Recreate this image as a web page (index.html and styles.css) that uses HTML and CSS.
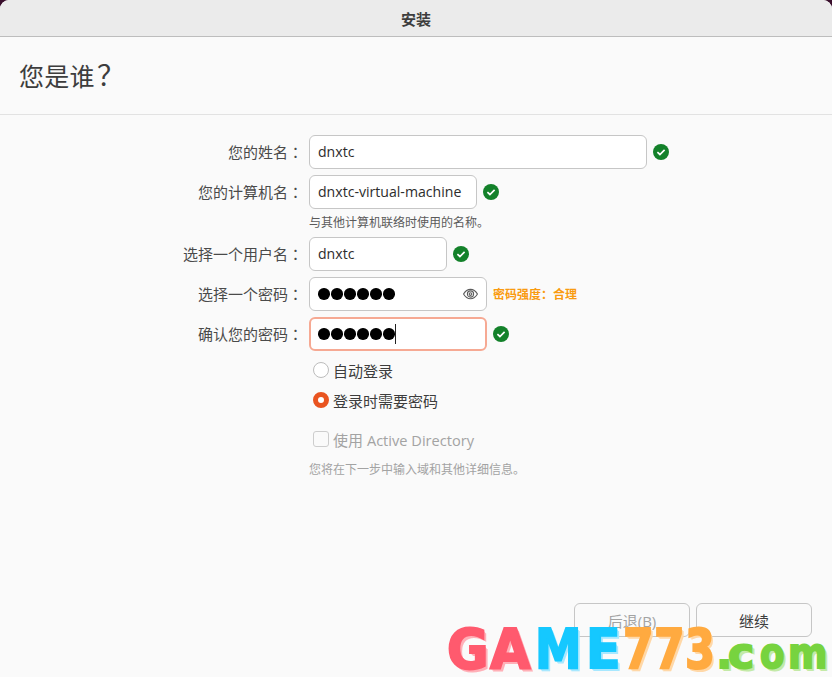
FILE: index.html
```html
<!DOCTYPE html>
<html lang="zh-CN">
<head>
<meta charset="UTF-8" />
<title>安装</title>
<link rel="stylesheet" href="styles.css">
</head>
<body>
<div class="window">
<header class="titlebar">安装</header>
<h1 class="heading">您是谁<span class="punct">？</span></h1>

<form class="form">
<label class="label">您的姓名<span class="punct">：</span></label>
<div class="line">
<div class="field field-name">dnxtc</div>
<svg class="ok" viewBox="0 0 16 16"><circle cx="8" cy="8" r="8"/><path d="M4.4 8.2l2.5 2.3 4.7-4.6"/></svg>
</div>

<label class="label">您的计算机名<span class="punct">：</span></label>
<div class="line">
<div class="field field-host">dnxtc-virtual-machine</div>
<svg class="ok" viewBox="0 0 16 16"><circle cx="8" cy="8" r="8"/><path d="M4.4 8.2l2.5 2.3 4.7-4.6"/></svg>
</div>

<div></div>
<p class="hint">与其他计算机联络时使用的名称。</p>

<label class="label">选择一个用户名<span class="punct">：</span></label>
<div class="line">
<div class="field field-user">dnxtc</div>
<svg class="ok" viewBox="0 0 16 16"><circle cx="8" cy="8" r="8"/><path d="M4.4 8.2l2.5 2.3 4.7-4.6"/></svg>
</div>

<label class="label">选择一个密码<span class="punct">：</span></label>
<div class="line">
<div class="field field-pass">
<span class="dots"><i></i><i></i><i></i><i></i><i></i><i></i></span>
<svg class="eye" viewBox="0 0 16 12"><path d="M.6 6C2.500 2.700 5 1 8 1s5.500 1.700 7.400 5C13.500 9.300 11 11 8 11S2.500 9.300.6 6z"/><circle cx="8" cy="6" r="3.300"/><circle cx="8" cy="6" r="1.400"/></svg>
</div>
<span class="strength">密码强度<span class="punct">：</span>合理</span>
</div>

<label class="label">确认您的密码<span class="punct">：</span></label>
<div class="line">
<div class="field field-pass field-focus">
<span class="dots"><i></i><i></i><i></i><i></i><i></i><i></i></span><span class="caret"></span>
</div>
<svg class="ok" viewBox="0 0 16 16"><circle cx="8" cy="8" r="8"/><path d="M4.4 8.2l2.5 2.3 4.7-4.6"/></svg>
</div>

<div></div>
<div class="options">
<div class="option"><span class="radio"></span>自动登录</div>
<div class="option"><span class="radio radio-on"></span>登录时需要密码</div>
<div class="option option-off"><span class="check"></span><span>使用 <span class="latin">Active Directory</span></span></div>
<p class="hint hint-off">您将在下一步中输入域和其他详细信息。</p>
</div>
</form>

<div class="buttons">
<button class="btn btn-off" type="button">后退(B)</button>
<button class="btn" type="button">继续</button>
</div>

<div class="mark">
<span class="red l-g">G</span><span class="red l-a">A</span><span class="blue l-m">M</span><span class="blue l-e">E</span><span class="orange l-7">7</span><span class="orange l-7">7</span><span class="orange l-3">3</span><span class="green small l-dot">.</span><span class="green small l-c">c</span><span class="green small l-o">o</span><span class="green small l-mm">m</span>
</div>
</div>
</body>
</html>
```
FILE: styles.css
```css
html, body {
margin: 0;
height: 100%;
background: #3a0f2c;
}

body {
font-family: "Open Sans", "Noto Sans CJK SC", sans-serif;
color: #3d3d3d;
overflow: hidden;
}

.punct {
font-family: "Noto Sans CJK TC", sans-serif;
}

.window {
position: relative;
height: 677px;
background: #fafafa;
border-radius: 9px 9px 0 0;
overflow: hidden;
}

.titlebar {
height: 36px;
line-height: 38px;
text-align: center;
font-size: 15px;
font-weight: 700;
background: #ebebeb;
border-bottom: 1px solid #bdbdbd;
}

.heading {
margin: 0;
height: 77px;
padding-left: 19px;
line-height: 79px;
font-size: 25px;
font-weight: 400;
letter-spacing: 0.3px;
border-bottom: 1px solid #e2e2e2;
}

.heading .punct {
margin-left: 2px;
font-size: 28px;
line-height: 0;
}

.form {
display: grid;
grid-template-columns: 300px 1fr;
column-gap: 9px;
row-gap: 6px;
padding-top: 20px;
}

.label {
display: flex;
align-items: center;
justify-content: flex-end;
height: 32px;
margin-right: -3px;
color: #4a4a4a;
font-size: 15px;
}

.line {
display: flex;
align-items: center;
gap: 6px;
}

.field {
display: flex;
align-items: center;
justify-content: space-between;
box-sizing: border-box;
height: 34px;
padding: 0 8px 2px;
background: #fff;
border: 1px solid #c6c6c6;
border-radius: 6px;
font-size: 14.100px;
color: #2c2c2c;
}

.field-name { width: 338px; }
.field-host { width: 168px; }
.field-user { width: 138px; }
.field-pass { width: 178px; padding-bottom: 0; }

.field-focus {
justify-content: flex-start;
border: 2px solid #f6a993;
padding: 0 7px;
}

.dots {
display: flex;
gap: 1.500px;
}

.dots i {
width: 11.500px;
height: 11.500px;
border-radius: 50%;
background: #000;
}

.caret {
width: 1px;
height: 20px;
background: #222;
}

.ok {
width: 16px;
height: 16px;
flex: none;
}

.ok circle { fill: #13812a; }

.ok path {
fill: none;
stroke: #fff;
stroke-width: 1.700;
}

.eye {
width: 15px;
height: 12px;
}

.eye path, .eye circle {
fill: none;
stroke: #5c5c5c;
stroke-width: 1.200;
}

.strength {
font-size: 12px;
font-weight: 700;
color: #f99b11;
}

.hint {
margin: 0;
height: 16px;
line-height: 16px;
font-size: 12px;
color: #5a5a5a;
}

.options {
padding-left: 4px;
margin-top: -2px;
}

.option {
display: flex;
align-items: center;
gap: 4px;
height: 30px;
font-size: 15px;
}

.option-off {
margin-top: 9px;
color: #a3a3a3;
}

.latin {
font-size: 14.600px;
}

.radio {
box-sizing: border-box;
width: 16px;
height: 16px;
border: 1px solid #bcbcbc;
border-radius: 50%;
background: #fff;
}

.radio-on {
border: 5px solid #e95420;
}

.check {
box-sizing: border-box;
width: 16px;
height: 16px;
border: 1px solid #cdcdcd;
border-radius: 3px;
background: #fafafa;
}

.hint-off {
margin: 8px 0 0 -4px;
color: #a3a3a3;
}

.buttons {
position: absolute;
right: 20px;
bottom: 40px;
display: flex;
gap: 6px;
}

.btn {
width: 116px;
height: 34px;
padding: 0;
background: #fafafa;
border: 1px solid #c6c6c6;
border-radius: 6px;
font: inherit;
font-size: 15px;
color: #3d3d3d;
}

.btn-off {
color: #a3a3a3;
}

.mark {
position: absolute;
left: 447px;
top: 621px;
display: flex;
font-family: "DejaVu Sans", sans-serif;
font-weight: 700;
font-size: 55px;
line-height: 56px;
white-space: nowrap;
-webkit-text-stroke: 2px currentColor;
}

.mark span {
display: block;
transform-origin: left center;
}

.red { color: #ff5a6e; text-shadow: 1px 1px #ffb0b8, 2px 2px #ffb0b8, 3px 3px #ffb0b8; }
.blue { color: #15c8ff; text-shadow: 1px 1px #a8e8ff, 2px 2px #a8e8ff, 3px 3px #a8e8ff; }
.orange { color: #ffaa40; text-shadow: 1px 1px #ffd8a8, 2px 2px #ffd8a8, 3px 3px #ffd8a8; }
.green { color: #77d33f; text-shadow: 1px 1px #c4eaa8, 2px 2px #c4eaa8, 3px 3px #c4eaa8; }

.mark .small {
font-size: 42px;
padding-top: 5px;
}

.l-g { margin-right: -2px; transform: scaleX(0.92); }
.l-a { margin-right: 2.500px; transform: scaleX(0.95); }
.l-m { margin-right: -3.700px; transform: scaleX(0.85); }
.l-e { margin-right: -0.600px; transform: scaleX(0.92); }
.l-7 { margin-right: -7.300px; transform: scaleX(0.8); }
.l-3 { margin-right: -7.300px; transform: scaleX(0.78); }
.l-dot { margin-right: -4px; }
.l-c { margin-right: 6.700px; transform: scaleX(1.05); }
.l-o { margin-right: -0.900px; transform: scaleX(0.85); }
.l-mm { transform: scaleX(0.9); }
```
